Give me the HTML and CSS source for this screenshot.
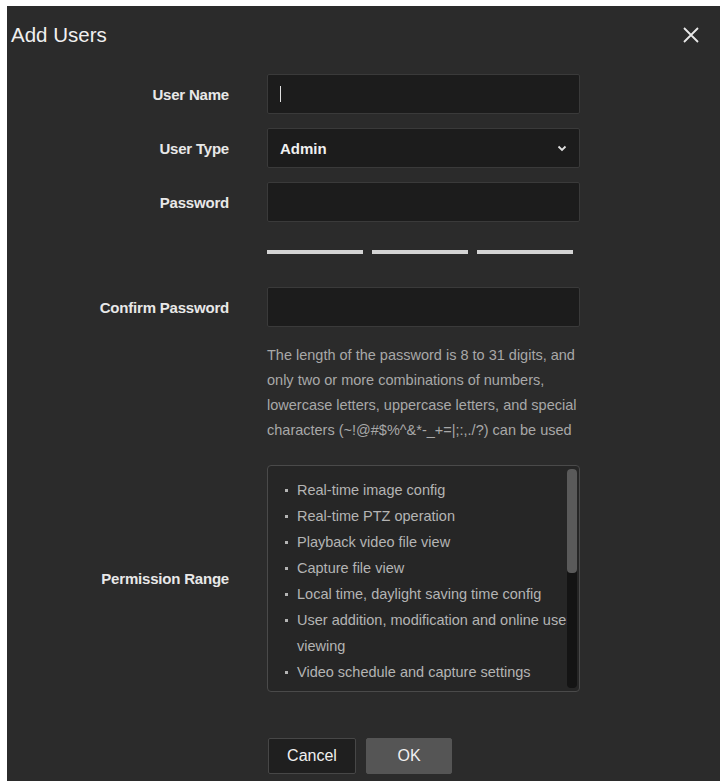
FILE: index.html
```html
<!DOCTYPE html>
<html lang="en">

<head>
    <meta charset="UTF-8">
    <meta name="viewport" content="width=device-width, initial-scale=1.0">
    <title>Add Users</title>

    <link rel="stylesheet" href="styles.css">
</head>

<body>
    <div class="dialog">
        <div class="header">
            <span class="title">Add Users</span>
            <svg class="close" width="18" height="18" viewBox="0 0 18 18">
                <path d="M2 2 L16 16 M16 2 L2 16" stroke="#e8e8e8" stroke-width="1.8" fill="none" />
            </svg>
        </div>

        <form class="form">
            <label class="label">User Name</label>
            <div class="field"><span class="caret"></span></div>

            <label class="label">User Type</label>
            <div class="field select">
                <span>Admin</span>
                <svg width="10" height="7" viewBox="0 0 10 7">
                    <path d="M1.5 1.5 L5 5 L8.5 1.5" stroke="#e0e0e0" stroke-width="1.8" fill="none" />
                </svg>
            </div>

            <label class="label">Password</label>
            <input class="field" type="password">

            <div></div>
            <div class="strength">
                <span class="bar"></span>
                <span class="bar"></span>
                <span class="bar"></span>
            </div>

            <label class="label">Confirm Password</label>
            <input class="field" type="password">

            <div></div>
            <p class="hint">The length of the password is 8 to 31 digits, and only two or more combinations of numbers, lowercase letters, uppercase letters, and special characters (~!@#$%^&amp;*-_+=|;:,./?) can be used</p>

            <label class="label">Permission Range</label>
            <div class="perms">
                <ul>
                    <li>Real-time image config</li>
                    <li>Real-time PTZ operation</li>
                    <li>Playback video file view</li>
                    <li>Capture file view</li>
                    <li>Local time, daylight saving time config</li>
                    <li>User addition, modification and online user viewing</li>
                    <li>Video schedule and capture settings</li>
                </ul>
                <div class="scroll"><div class="thumb"></div></div>
            </div>
        </form>

        <div class="buttons">
            <button class="btn cancel" type="button">Cancel</button>
            <button class="btn ok" type="button">OK</button>
        </div>
    </div>
</body>

</html>
```

FILE: styles.css
```css
body {
    margin: 0;
    background-color: white;
    font-family: 'Liberation Sans', Arial, sans-serif;
}

.dialog {
    margin: 6px 0 0 7px;
    height: 775px;
    background-color: #2b2b2b;
    display: flex;
    flex-direction: column;
}

.header {
    height: 58px;
    display: flex;
    align-items: center;
    justify-content: space-between;
    padding: 0 20px 0 4px;
}

.title {
    color: #f0f0f0;
    font-size: 20.5px;
}

.form {
    display: grid;
    grid-template-columns: 222px 313px;
    column-gap: 38px;
    row-gap: 14px;
    align-items: center;
    margin-top: 10px;
}

.label {
    text-align: right;
    color: #e8e8e8;
    font-size: 15px;
    font-weight: bold;
    letter-spacing: -0.2px;
}

.field {
    box-sizing: border-box;
    height: 40px;
    background-color: #1c1c1c;
    border: 1px solid #3a3a3a;
    border-radius: 2px;
    color: #f0f0f0;
    font-family: inherit;
    font-size: 15px;
    font-weight: bold;
    padding: 0 12px;
    display: flex;
    align-items: center;
}

.caret {
    width: 1px;
    height: 16px;
    background-color: #e0e0e0;
}

.select {
    justify-content: space-between;
}

.strength {
    display: flex;
    gap: 9px;
    margin: 14px 0 19px;
}

.bar {
    width: 96px;
    height: 4px;
    background-color: #d4d4d4;
}

.hint {
    margin: 2px 0 8px;
    color: #a8a8a8;
    font-size: 14.5px;
    line-height: 25px;
}

.perms {
    height: 227px;
    box-sizing: border-box;
    border: 1px solid #4a4a4a;
    border-radius: 4px;
    background-color: #262626;
    overflow: hidden;
    position: relative;
}

.scroll {
    position: absolute;
    top: 3px;
    right: 2px;
    bottom: 3px;
    width: 10px;
    background-color: #141414;
    border-radius: 4px;
}

.thumb {
    height: 104px;
    background-color: #5a5a5a;
    border-radius: 4px;
}

.perms ul {
    margin: 0;
    padding: 11px 0 10px 17px;
    list-style: none;
}

.perms li {
    color: #b4b4b4;
    font-size: 14.5px;
    line-height: 26px;
    padding-left: 12px;
    position: relative;
}

.perms li::before {
    content: "";
    position: absolute;
    left: 0;
    top: 12px;
    width: 3px;
    height: 3px;
    background-color: #b4b4b4;
}

.buttons {
    display: flex;
    gap: 10px;
    margin: 46px 0 0 261px;
}

.btn {
    height: 36px;
    font-family: inherit;
    font-size: 16px;
    color: #f0f0f0;
    border-radius: 2px;
}

.cancel {
    width: 88px;
    background-color: #1f1f1f;
    border: 1px solid #474747;
}

.ok {
    width: 86px;
    background-color: #555555;
    border: 1px solid #555555;
}
```
